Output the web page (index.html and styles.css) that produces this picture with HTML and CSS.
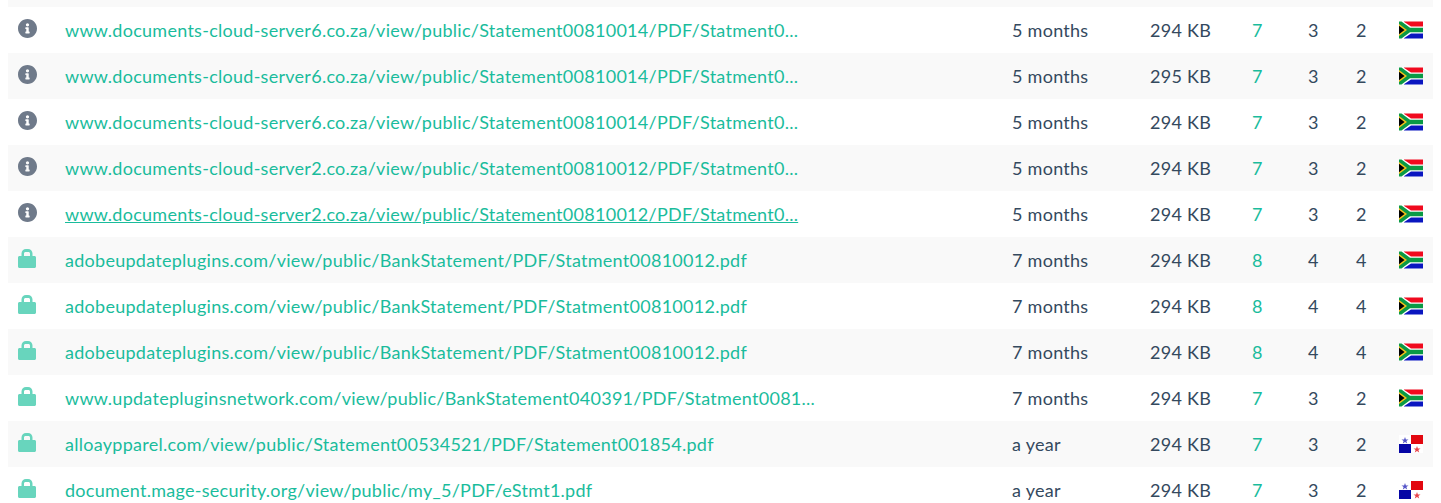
FILE: index.html
```html
<!DOCTYPE html>
<html lang="en">
<head>
<meta charset="utf-8">
<title>URL list</title>
<link rel="stylesheet" href="styles.css">
</head>
<body>
<svg class="defs" width="0" height="0" aria-hidden="true">
  <defs>
    <symbol id="info" viewBox="8 8 496 496"><path d="M256 8C119.043 8 8 119.083 8 256c0 136.997 111.043 248 248 248s248-111.003 248-248C504 119.083 392.957 8 256 8zm0 110c23.196 0 42 18.804 42 42s-18.804 42-42 42-42-18.804-42-42 18.804-42 42-42zm56 254c0 6.627-5.373 12-12 12h-88c-6.627 0-12-5.373-12-12v-24c0-6.627 5.373-12 12-12h12v-64h-12c-6.627 0-12-5.373-12-12v-24c0-6.627 5.373-12 12-12h64c6.627 0 12 5.373 12 12v100h12c6.627 0 12 5.373 12 12v24z"/></symbol>
    <symbol id="lock" viewBox="0 0 18 19"><path d="M1.500 7H3.500V4.500C3.500 2 5.500 0 8 0h2c2.500 0 4.500 2 4.500 4.500V7h2c.8 0 1.500.7 1.500 1.500v9c0 .8-.7 1.500-1.500 1.500h-15C.7 19 0 18.300 0 17.500v-9C0 7.700.7 7 1.500 7zM6 4.500V7h6V4.500C12 3.700 11.300 3 10.500 3h-3C6.700 3 6 3.700 6 4.500z"/></symbol>
    <symbol id="za" viewBox="0 0 24 17">
      <rect width="24" height="17" fill="#fff"/>
      <rect x="5" width="19" height="5.500" fill="#f00a1e"/>
      <rect x="5" y="11.500" width="19" height="5.500" fill="#0a16c0"/>
      <path d="M0 0h4.500l7.500 5h12v7H12l-7.500 5H0z" fill="#fff"/>
      <path d="M0 0h2.500l8.500 6.200h13v4.600H11L2.500 17H0z" fill="#0a9a45"/>
      <path d="M0 2.500l8 6-8 6z" fill="#f5c21b"/>
      <path d="M0 4.300l5.600 4.200L0 12.700z" fill="#000"/>
    </symbol>
    <symbol id="pa" viewBox="0 0 24 18">
      <rect width="24" height="18" fill="#fff"/>
      <rect x="12" width="12" height="9" fill="#e2070f"/>
      <rect y="9" width="12" height="9" fill="#0505a5"/>
      <path d="M6 2l.9 2.500h2.600L7.400 6.100l.8 2.500L6 7.100 3.800 8.600l.8-2.500-2.100-1.600h2.600z" fill="#5555c8"/>
      <path d="M18 11l.9 2.500h2.600l-2.100 1.600.8 2.500-2.200-1.500-2.200 1.500.8-2.500-2.100-1.600h2.600z" fill="#e8444a"/>
    </symbol>
  </defs>
</svg>
<main class="list">
  <div class="row row-top"></div>

  <div class="row">
    <svg class="ico ico-info"><use href="#info"/></svg>
    <a class="url" href="#">www.documents-cloud-server6.co.za/view/public/Statement00810014/PDF/Statment0...</a>
    <span class="age">5 months</span><span class="size">294 KB</span><span class="n1">7</span><span class="n2">3</span><span class="n3">2</span>
    <svg class="flag"><use href="#za"/></svg>
  </div>
  <div class="row">
    <svg class="ico ico-info"><use href="#info"/></svg>
    <a class="url" href="#">www.documents-cloud-server6.co.za/view/public/Statement00810014/PDF/Statment0...</a>
    <span class="age">5 months</span><span class="size">295 KB</span><span class="n1">7</span><span class="n2">3</span><span class="n3">2</span>
    <svg class="flag"><use href="#za"/></svg>
  </div>
  <div class="row">
    <svg class="ico ico-info"><use href="#info"/></svg>
    <a class="url" href="#">www.documents-cloud-server6.co.za/view/public/Statement00810014/PDF/Statment0...</a>
    <span class="age">5 months</span><span class="size">294 KB</span><span class="n1">7</span><span class="n2">3</span><span class="n3">2</span>
    <svg class="flag"><use href="#za"/></svg>
  </div>
  <div class="row">
    <svg class="ico ico-info"><use href="#info"/></svg>
    <a class="url" href="#">www.documents-cloud-server2.co.za/view/public/Statement00810012/PDF/Statment0...</a>
    <span class="age">5 months</span><span class="size">294 KB</span><span class="n1">7</span><span class="n2">3</span><span class="n3">2</span>
    <svg class="flag"><use href="#za"/></svg>
  </div>
  <div class="row">
    <svg class="ico ico-info"><use href="#info"/></svg>
    <a class="url url-hover" href="#">www.documents-cloud-server2.co.za/view/public/Statement00810012/PDF/Statment0...</a>
    <span class="age">5 months</span><span class="size">294 KB</span><span class="n1">7</span><span class="n2">3</span><span class="n3">2</span>
    <svg class="flag"><use href="#za"/></svg>
  </div>
  <div class="row">
    <svg class="ico ico-lock"><use href="#lock"/></svg>
    <a class="url" href="#">adobeupdateplugins.com/view/public/BankStatement/PDF/Statment00810012.pdf</a>
    <span class="age">7 months</span><span class="size">294 KB</span><span class="n1">8</span><span class="n2">4</span><span class="n3">4</span>
    <svg class="flag"><use href="#za"/></svg>
  </div>
  <div class="row">
    <svg class="ico ico-lock"><use href="#lock"/></svg>
    <a class="url" href="#">adobeupdateplugins.com/view/public/BankStatement/PDF/Statment00810012.pdf</a>
    <span class="age">7 months</span><span class="size">294 KB</span><span class="n1">8</span><span class="n2">4</span><span class="n3">4</span>
    <svg class="flag"><use href="#za"/></svg>
  </div>
  <div class="row">
    <svg class="ico ico-lock"><use href="#lock"/></svg>
    <a class="url" href="#">adobeupdateplugins.com/view/public/BankStatement/PDF/Statment00810012.pdf</a>
    <span class="age">7 months</span><span class="size">294 KB</span><span class="n1">8</span><span class="n2">4</span><span class="n3">4</span>
    <svg class="flag"><use href="#za"/></svg>
  </div>
  <div class="row">
    <svg class="ico ico-lock"><use href="#lock"/></svg>
    <a class="url" href="#">www.updatepluginsnetwork.com/view/public/BankStatement040391/PDF/Statment0081...</a>
    <span class="age">7 months</span><span class="size">294 KB</span><span class="n1">7</span><span class="n2">3</span><span class="n3">2</span>
    <svg class="flag"><use href="#za"/></svg>
  </div>
  <div class="row">
    <svg class="ico ico-lock"><use href="#lock"/></svg>
    <a class="url" href="#">alloaypparel.com/view/public/Statement00534521/PDF/Statement001854.pdf</a>
    <span class="age">a year</span><span class="size">294 KB</span><span class="n1">7</span><span class="n2">3</span><span class="n3">2</span>
    <svg class="flag"><use href="#pa"/></svg>
  </div>
  <div class="row">
    <svg class="ico ico-lock"><use href="#lock"/></svg>
    <a class="url" href="#">document.mage-security.org/view/public/my_5/PDF/eStmt1.pdf</a>
    <span class="age">a year</span><span class="size">294 KB</span><span class="n1">7</span><span class="n2">3</span><span class="n3">2</span>
    <svg class="flag"><use href="#pa"/></svg>
  </div>
</main>
</body>
</html>
```
FILE: styles.css
```css
html, body {
  margin: 0;
  padding: 0;
  height: 503px;
  overflow: hidden;
  background: #fff;
}
body {
  padding: 0 8px;
  font-family: Lato, "Liberation Sans", sans-serif;
  font-size: 18px;
  letter-spacing: 0.27px;
  color: #34495e;
}
.defs {
  position: absolute;
}
.list {
  display: flex;
  flex-direction: column;
}
.row {
  display: grid;
  grid-template-columns: 57px 947px 138px 102px 56px 48px 43px 24px;
  align-items: center;
  height: 46px;
  flex: none;
  line-height: 45px;
}
.row:nth-child(odd) {
  background: #f9f9f9;
}
.row-top {
  height: 7px;
  background: #f9f9f9;
}
.ico {
  display: block;
  margin-left: 10px;
  margin-top: -3px;
  height: 19px;
}
.ico-info {
  width: 19px;
  fill: #6f7a8a;
}
.ico-lock {
  width: 18px;
  fill: #68d5bd;
}
.url, .n1 {
  color: #1abc9c;
  text-decoration: none;
}
.url-hover {
  text-decoration: underline;
}
.flag {
  display: block;
  width: 24px;
  height: 18px;
}
```
